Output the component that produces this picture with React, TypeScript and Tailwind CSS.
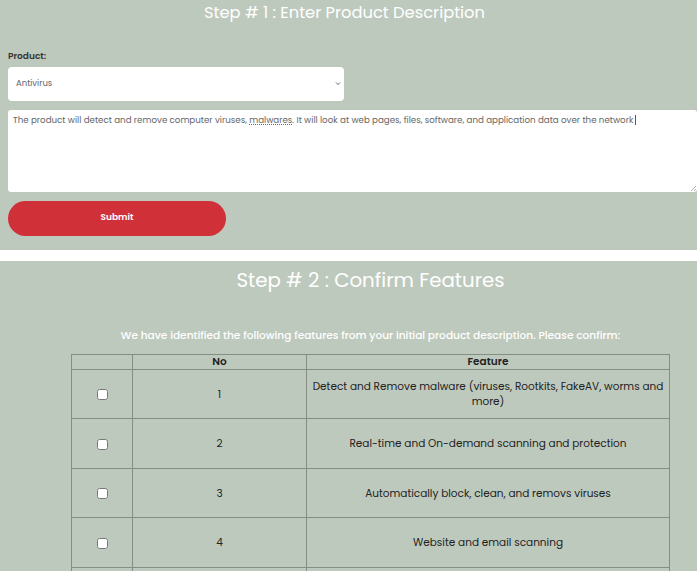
const features = [
  "Detect and Remove malware (viruses, Rootkits, FakeAV, worms and more)",
  "Real-time and On-demand scanning and protection",
  "Automatically block, clean, and removs viruses",
  "Website and email scanning",
  "Firewall and network protection",
];

const rowHeights = ["h-[49px]", "h-[50px]", "h-[49px]", "h-[50px]", "h-[50px]"];

const App = () => {
  const font = { fontFamily: "'Poppins', 'Open Sans', sans-serif" };
  return (
    <div className="w-[697px] bg-white text-[#222]" style={font}>
      <section className="bg-[#bec9bd] px-2 pb-[14px]">
        <h1 className="text-center text-white text-[16.3px] leading-[26px] mr-[8px]">
          Step # 1 : Enter Product Description
        </h1>
        <label className="block mt-[24px] text-[9px] font-semibold text-[#333]">Product:</label>
        <div className="relative mt-[3px] w-[336px] h-[34px] bg-white rounded-[4px] flex items-center px-2">
          <span className="text-[8.5px] text-[#666]">Antivirus</span>
          <svg className="absolute right-[3px] top-[14px]" width="6" height="5" viewBox="0 0 6 5">
            <path d="M1 1.5 L3 3.5 L5 1.5" stroke="#666" strokeWidth="1" fill="none" />
          </svg>
        </div>
        <div className="relative mt-[9px] w-[689px] h-[82px] bg-white rounded-[3px] px-[5px] py-[4px]">
          <p className="text-[8.7px] text-[#666] leading-[12px]">
            The product will detect and remove computer viruses,{" "}
            <span className="underline decoration-dotted decoration-red-500">malwares</span>. It will look at web pages, files, software, and application data over the network
            <span className="inline-block w-px h-[10px] bg-[#555] align-middle ml-[2px]" />
          </p>
          <svg className="absolute right-0 bottom-0" width="7" height="7" viewBox="0 0 7 7">
            <path d="M6 1 L1 6 M6 4 L4 6" stroke="#999" strokeWidth="0.8" />
          </svg>
        </div>
        <button className="mt-[9px] w-[218px] h-[35px] rounded-full bg-[#d03139] text-white text-[9px] font-semibold">
          Submit
        </button>
      </section>
      <section className="mt-[11px] bg-[#bec9bd] pl-[71px] pr-[27px] pb-4">
        <h2 className="text-center text-white text-[19.8px] leading-[38px]">
          Step # 2 : Confirm Features
        </h2>
        <p className="text-center text-white text-[10.6px] font-medium mt-[29px]">
          We have identified the following features from your initial product description. Please confirm:
        </p>
        <table className="mt-[11px] w-[599px] border-collapse text-[10.5px] text-[#222]">
          <thead>
            <tr className="h-[15px]">
              <th className="border border-[#868d85] w-[61px] p-0"></th>
              <th className="border border-[#868d85] w-[174px] font-semibold p-0 leading-[14px]">No</th>
              <th className="border border-[#868d85] font-semibold p-0 leading-[14px]">Feature</th>
            </tr>
          </thead>
          <tbody>
            {features.map((f, i) => (
              <tr key={i} className={rowHeights[i]}>
                <td className="border border-[#868d85] text-center p-0">
                  <input type="checkbox" className="w-[11px] h-[11px] align-middle" />
                </td>
                <td className="border border-[#868d85] text-center p-0">{i + 1}</td>
                <td className="border border-[#868d85] text-center px-1 py-0 leading-[15px]">{f}</td>
              </tr>
            ))}
          </tbody>
        </table>
      </section>
    </div>
  );
};

export default App;
